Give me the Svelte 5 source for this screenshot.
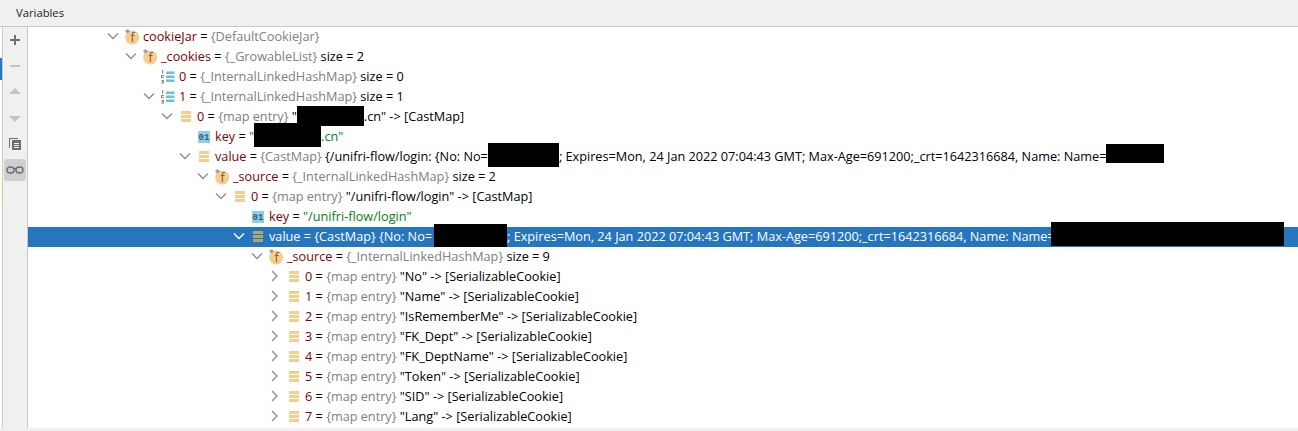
<script>
  const rows = [
    { x: 107, open: true, icon: 'f', name: 'cookieJar', parts: [['t', '{DefaultCookieJar}']] },
    { x: 125, open: true, icon: 'f', name: '_cookies', parts: [['t', '{_GrowableList}'], ['v', ' size = 2']] },
    { x: 143, icon: 'list', name: '0', parts: [['t', '{_InternalLinkedHashMap}'], ['v', ' size = 0']] },
    { x: 143, open: true, icon: 'list', name: '1', parts: [['t', '{_InternalLinkedHashMap}'], ['v', ' size = 1']] },
    { x: 161, open: true, icon: 'map', name: '0', parts: [['t', '{map entry}'], ['v', ' "'], ['r', 67, 20, -1, 0], ['v', '.cn" -> [CastMap]']] },
    { x: 179, icon: 'key', name: 'key', parts: [['s', '"'], ['r', 67, 24, -4, 0], ['s', '.cn"']] },
    { x: 179, open: true, icon: 'map', name: 'value', parts: [['t', '{CastMap}'], ['v', ' {/unifri-flow/login: {No: No='], ['r', 71, 24, -4, 0], ['v', '; Expires=Mon, 24 Jan 2022 07:04:43 GMT; Max-Age=691200;_crt=1642316684, Name: Name='], ['r', 58, 19, -3, 0]] },
    { x: 197, open: true, icon: 'f', name: '_source', parts: [['t', '{_InternalLinkedHashMap}'], ['v', ' size = 2']] },
    { x: 215, open: true, icon: 'map', name: '0', parts: [['t', '{map entry}'], ['v', ' "/unifri-flow/login" -> [CastMap]']] },
    { x: 233, icon: 'key', name: 'key', parts: [['s', '"/unifri-flow/login"']] },
    { x: 233, open: true, selected: true, icon: 'map', name: 'value', parts: [['t', '{CastMap}'], ['v', ' {No: No='], ['r', 73, 23, -3, 2], ['v', '; Expires=Mon, 24 Jan 2022 07:04:43 GMT; Max-Age=691200;_crt=1642316684, Name: Name='], ['r', 233, 24, -5, -4]] },
    { x: 251, open: true, icon: 'f', name: '_source', parts: [['t', '{_InternalLinkedHashMap}'], ['v', ' size = 9']] },
    ...['No', 'Name', 'IsRememberMe', 'FK_Dept', 'FK_DeptName', 'Token', 'SID', 'Lang'].map((k, i) => ({
      x: 269, closed: true, icon: 'map', name: String(i),
      parts: [['t', '{map entry}'], ['v', ` "${k}" -> [SerializableCookie]`]]
    }))
  ];
</script>

<div class="window">
  <header class="title">Variables</header>
  <div class="body">
    <div class="edge">
      <div class="edge-blue"></div>
      <div class="edge-yellow"></div>
    </div>
    <aside class="tools">
      <button class="tool" aria-label="Add">
        <svg width="16" height="16" viewBox="0 0 16 16"><path d="M7 3h2v4h4v2H9v4H7V9H3V7h4z" fill="#6e6e6e"/></svg>
      </button>
      <button class="tool" aria-label="Remove">
        <svg width="16" height="16" viewBox="0 0 16 16"><path d="M3 7h10v2H3z" fill="#c4c4c4"/></svg>
      </button>
      <button class="tool" aria-label="Up">
        <svg width="16" height="16" viewBox="0 0 16 16"><path d="M8 4l6 6H2z" fill="#c4c4c4"/></svg>
      </button>
      <button class="tool" aria-label="Down">
        <svg width="16" height="16" viewBox="0 0 16 16"><path d="M2 6h12l-6 6z" fill="#c4c4c4"/></svg>
      </button>
      <button class="tool" aria-label="Copy">
        <svg width="16" height="16" viewBox="0 0 16 16"><path d="M2 2h9v1H3v9H2z" fill="#6e6e6e"/><path fill-rule="evenodd" d="M5 4h9v10H5zM7 7v1h5V7zM7 9v1h5V9zM7 11v1h5v-1z" fill="#6e6e6e"/></svg>
      </button>
      <button class="tool active" aria-label="Watches">
        <svg width="18" height="12" viewBox="0 0 18 12"><path d="M1 6c0-2 1-3 3.500-3S8 4 8 6s-1 3-3.500 3S1 8 1 6zM10 6c0-2 1-3 3.500-3S17 4 17 6s-1 3-3.500 3S10 8 10 6zM8 5c.6-.5 1.400-.5 2 0" fill="none" stroke="#6e6e6e" stroke-width="1.500"/></svg>
      </button>
    </aside>
    <main class="tree">
      {#each rows as r}
        <div class="row" class:selected={r.selected} style="padding-left:{r.x - 28}px">
          <span class="arrow">
            {#if r.open}
              <svg width="12" height="12" viewBox="0 0 12 12"><path d="M1 3.500L6 8.500l5-5" fill="none" stroke="currentColor" stroke-width="1.400"/></svg>
            {:else if r.closed}
              <svg width="12" height="12" viewBox="0 0 12 12"><path d="M3 1L8 6l-5 5" fill="none" stroke="currentColor" stroke-width="1.400"/></svg>
            {/if}
          </span>
          <span class="icon">
            {#if r.icon === 'f'}
              <svg width="18" height="18" viewBox="0 0 18 18">
                <circle cx="7.200" cy="9.500" r="7" fill="#f7cd8d"/>
                <path d="M0 3l3-2 2 2.500-3 2z" fill="#9a9fa6"/>
                <text x="7.500" y="13.500" class="f">f</text>
              </svg>
            {:else if r.icon === 'list'}
              <svg width="18" height="16" viewBox="0 0 18 16">
                <path d="M5 2.500h8.500V5H5zM5 6.500h8.500V9H5zM5 10.500h8.500V13H5z" fill="#6cc0e4"/>
                <path d="M1 1h1.200v3.500H1zM0 6h3v1H1v1h2v1H0zM0 11h3v3.500H0v-1h2V13H1v-1h1v-.2H0z" fill="#8a8a8a"/>
              </svg>
            {:else if r.icon === 'map'}
              <svg width="16" height="16" viewBox="0 0 16 16">
                <path d="M2 2h10v3H2zM2 6h10v3H2zM2 10h10v3H2z" fill={r.selected ? '#b3a36d' : '#f7cd8d'}/>
              </svg>
            {:else}
              <svg width="16" height="16" viewBox="0 0 16 16">
                <rect x="1" y="2" width="12" height="12" fill="#8ccfe8"/>
                <text x="7" y="11" class="o1">01</text>
              </svg>
            {/if}
          </span>
          <span class="label"><span class="name">{r.name}</span> = {#each r.parts as p}{#if p[0] === 't'}<span class="type">{p[1]}</span>{:else if p[0] === 's'}<span class="str">{p[1]}</span>{:else if p[0] === 'v'}<span class="val">{p[1]}</span>{:else}<span class="redact" style="width:{p[1]}px;height:{p[2]}px;margin:{p[3] + 1}px 0 {19 - p[2] - p[3]}px {p[4]}px"></span>{/if}{/each}</span>
        </div>
      {/each}
    </main>
  </div>
</div>

<style>
  :global(body) { margin: 0; background: #f0f0f0; }
  .window { width: 1298px; height: 431px; display: flex; flex-direction: column; background: #f0f0f0; overflow: hidden;
    font-family: "Open Sans", "Noto Sans", sans-serif; font-size: 12.700px; color: #000; }
  .title { height: 26px; line-height: 26px; padding-left: 16px; border-bottom: 1px solid #c9c9c9; font-size: 11.250px; color: #222; flex: none; }
  .body { display: flex; height: 401px; flex: none; }
  .edge { width: 2px; background: #fff; position: relative; flex: none; }
  .edge-blue { position: absolute; top: 31px; height: 22px; width: 2px; background: #2675bf; }
  .edge-yellow { position: absolute; top: 138px; height: 40px; width: 2px; background: #fffde8; }
  .tools { width: 24px; flex: none; border-left: 1px solid #c9c9c9; border-right: 1px solid #c9c9c9; background: #f0f0f0;
    display: flex; flex-direction: column; align-items: center; gap: 1px; }
  .tool { width: 22px; height: 25px; border: 0; padding: 0; background: none; display: flex; align-items: center; justify-content: center; border-radius: 3px; flex: none; }
  .tool.active { background: #cfcfcf; height: 22px; margin-top: 2px; }
  .tree { flex: 1; background: #fff; height: 401px; overflow: hidden; white-space: pre; }
  .row { height: 20px; line-height: 20px; display: flex; align-items: flex-start; color: #000; }
  .row.selected { background: #2675bf; color: #fff; }
  .arrow { width: 12px; height: 12px; margin: 3px 6px 0 0; color: #8e8e8e; flex: none; display: flex; }
  .selected .arrow { color: #fff; }
  .icon { width: 18px; height: 18px; flex: none; display: flex; align-items: center; margin-top: 1px; }
  .label { display: block; height: 20px; margin-top: -1px; }
  .name { color: #7f0000; }
  .selected .name, .selected .type, .selected .val { color: #fff; }
  .type { color: #808080; }
  .str { color: #067d17; }
  .redact { display: inline-block; background: #000; vertical-align: top; }
  .f { font: 12px "Open Sans", sans-serif; fill: #6b5a3a; text-anchor: middle; }
  .o1 { font: bold 9px "Liberation Mono", monospace; fill: #3a5a70; text-anchor: middle; }
</style>
